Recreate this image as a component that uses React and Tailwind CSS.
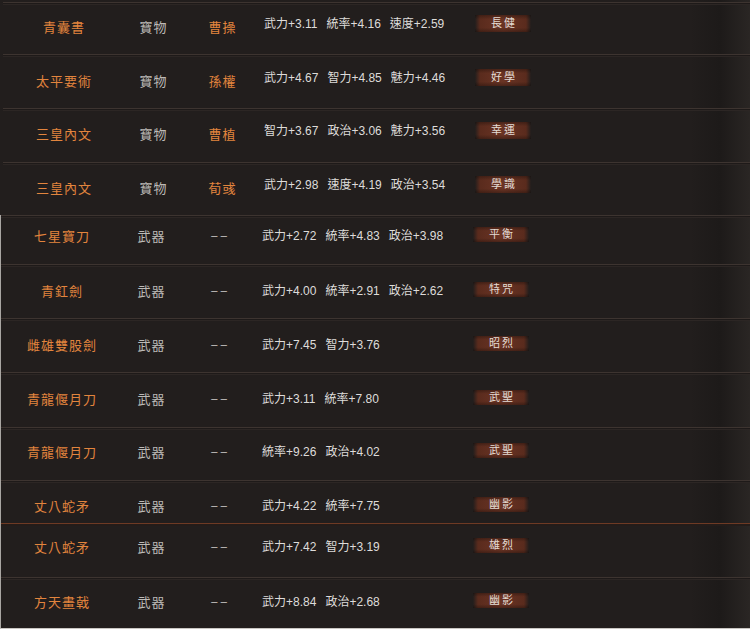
import React from "react";

// item rows: h = distance between separator lines, adj = vertical nudge of the text
const topRows = [
  { name: "青囊書", type: "寶物", owner: "曹操", stats: ["武力+3.11", "統率+4.16", "速度+2.59"], skill: "長健", h: "h-[52px]", adj: "pb-[3px]" },
  { name: "太平要術", type: "寶物", owner: "孫權", stats: ["武力+4.67", "智力+4.85", "魅力+4.46"], skill: "好學", h: "h-[54px]", adj: "pb-[1px]" },
  { name: "三皇內文", type: "寶物", owner: "曹植", stats: ["智力+3.67", "政治+3.06", "魅力+3.56"], skill: "幸運", h: "h-[54px]", adj: "pb-[3px]" },
  { name: "三皇內文", type: "寶物", owner: "荀彧", stats: ["武力+2.98", "速度+4.19", "政治+3.54"], skill: "學識", h: "h-[53px]", adj: "pb-[2px]" },
];

const lowerRows = [
  { name: "七星寶刀", type: "武器", stats: ["武力+2.72", "統率+4.83", "政治+3.98"], skill: "平衡", h: "h-[49px]", adj: "pb-[8px]" },
  { name: "青釭劍", type: "武器", stats: ["武力+4.00", "統率+2.91", "政治+2.62"], skill: "特咒", h: "h-[54px]", adj: "pb-[1px]" },
  { name: "雌雄雙股劍", type: "武器", stats: ["武力+7.45", "智力+3.76"], skill: "昭烈", h: "h-[54px]", adj: "pb-[1px]" },
  { name: "青龍偃月刀", type: "武器", stats: ["武力+3.11", "統率+7.80"], skill: "武聖", h: "h-[55px]", adj: "pb-[2px]" },
  { name: "青龍偃月刀", type: "武器", stats: ["統率+9.26", "政治+4.02"], skill: "武聖", h: "h-[53px]", adj: "pb-[4px]" },
  { name: "丈八蛇矛", type: "武器", stats: ["武力+4.22", "統率+7.75"], skill: "幽影", h: "h-[43px]", adj: "pt-[8px]" },
  { name: "丈八蛇矛", type: "武器", stats: ["武力+7.42", "智力+3.19"], skill: "雄烈", h: "h-[54px]", adj: "pb-[7px]", red: true },
  { name: "方天畫戟", type: "武器", stats: ["武力+8.84", "政治+2.68"], skill: "幽影", h: "h-[51px]", adj: "pb-[2px]" },
];

const font = "font-['Liberation_Sans','Noto_Sans_CJK_TC',sans-serif]";

function Separator({ red }) {
  if (red) {
    return <div className="h-[3px] border-t border-[#6e3a24] bg-[#241c19]" />;
  }
  return (
    <div className="h-[3px] border-t border-b border-t-[#3d3430] border-b-[#2c2624] bg-[#1e1a19]" />
  );
}

function Badge({ text, lower }) {
  return (
    <div
      className={`flex w-[56px] items-center justify-center bg-[linear-gradient(180deg,rgba(0,0,0,0.3),rgba(0,0,0,0)_25%,rgba(0,0,0,0)_75%,rgba(0,0,0,0.3)),linear-gradient(90deg,rgba(90,40,26,0)_0%,#5a2b1d_9%,#6a3424_50%,#5a2b1d_91%,rgba(90,40,26,0)_100%)] pl-[2px] text-[11px] tracking-[2px] text-[#e4dcd4] ${
        lower ? "mb-[5px] h-[15px]" : "mb-[9px] h-[17px]"
      }`}
    >
      {text}
    </div>
  );
}

function Row({ row, lower }) {
  return (
    <div className={`flex flex-col ${row.h}`}>
      <Separator red={row.red} />
      <div className={`flex flex-1 items-center ${row.adj}`}>
        <div className="w-[121px] pl-[1px] text-center text-[13px] tracking-[1px] text-[#e2853e]">
          {row.name}
        </div>
        <div className="w-[58px] pl-[1px] text-center text-[13px] tracking-[1px] text-[#bdbab7]">
          {row.type}
        </div>
        {row.owner ? (
          <div className="w-[80px] pl-[1px] text-center text-[13px] tracking-[1px] text-[#e2853e]">
            {row.owner}
          </div>
        ) : (
          <div className="w-[80px] text-center text-[13px] tracking-[2px] text-[#b3b0ad]">
            −−
          </div>
        )}
        <div
          className={`flex w-[213px] gap-[9px] pl-[2px] text-[12px] text-[#dedcda] ${
            lower ? "mb-[2px]" : "mb-[8px]"
          }`}
        >
          {row.stats.map((s, i) => (
            <span key={i}>{s}</span>
          ))}
        </div>
        <Badge text={row.skill} lower={lower} />
      </div>
    </div>
  );
}

export default function App() {
  return (
    <div
      className={`h-[629px] w-[750px] overflow-hidden bg-[linear-gradient(90deg,#221e1d_0%,#221e1d_92%,#1d1a19_96%,#2a2624_100%)] ${font}`}
    >
      {/* first screenshot */}
      <div className="pt-[2px] pl-[3px]">
        {topRows.map((r, i) => (
          <Row key={i} row={r} />
        ))}
      </div>

      {/* second screenshot */}
      <div className="border-l border-b border-l-[#a9a6a2] border-b-[#c9c6c2]">
        {lowerRows.map((r, i) => (
          <Row key={i} row={r} lower />
        ))}
      </div>
    </div>
  );
}
